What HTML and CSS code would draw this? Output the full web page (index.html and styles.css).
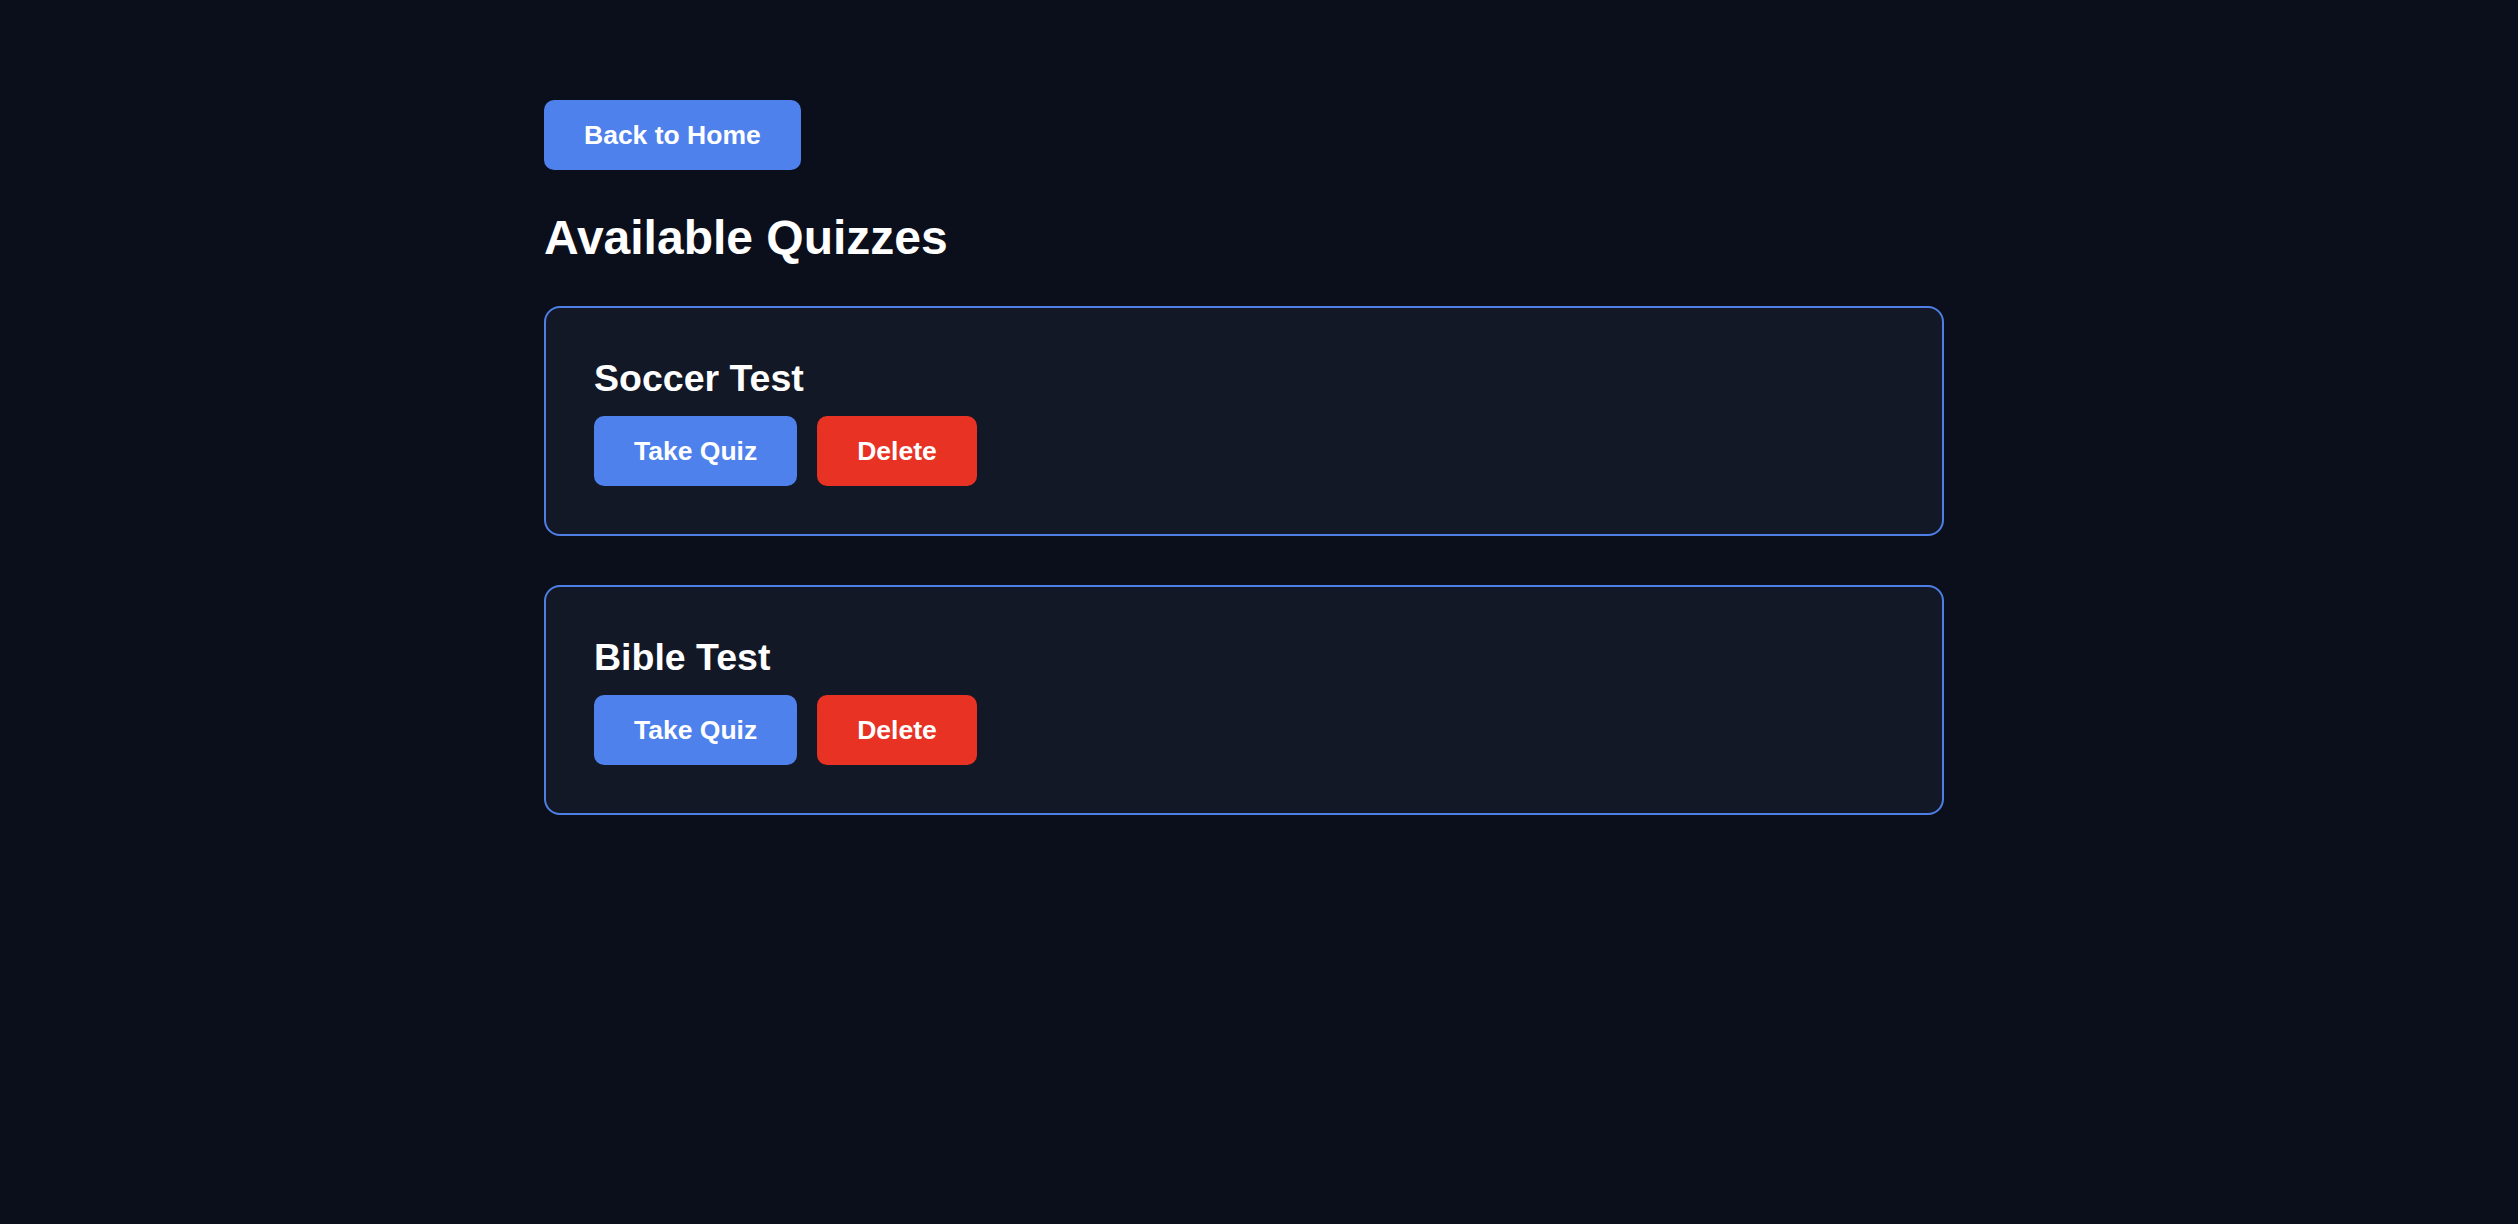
FILE: index.html
```html
<!DOCTYPE html>
<html lang="en">
<head>
<meta charset="utf-8">
<title>Available Quizzes</title>
<link rel="stylesheet" href="styles.css">
</head>
<body>
<main class="page">
  <button class="btn btn-blue btn-back">Back to Home</button>
  <h1 class="title">Available Quizzes</h1>
  <div class="list">
    <section class="card">
      <h2 class="card-title">Soccer Test</h2>
      <div class="actions">
        <button class="btn btn-blue">Take Quiz</button>
        <button class="btn btn-red">Delete</button>
      </div>
    </section>
    <section class="card">
      <h2 class="card-title">Bible Test</h2>
      <div class="actions">
        <button class="btn btn-blue">Take Quiz</button>
        <button class="btn btn-red">Delete</button>
      </div>
    </section>
  </div>
</main>
</body>
</html>
```

FILE: styles.css
```css
html, body {
  margin: 0;
  padding: 0;
  background: #0b0f1c;
  min-height: 100vh;
}
body {
  font-family: "Liberation Sans", Arial, Helvetica, sans-serif;
  color: #ffffff;
}
.page {
  width: 1400px;
  margin-left: 544px;
  padding-top: 100px;
  display: flex;
  flex-direction: column;
  align-items: flex-start;
}
.btn {
  font-family: "Liberation Sans", Arial, Helvetica, sans-serif;
  font-weight: 700;
  font-size: 26.5px;
  line-height: 30px;
  padding: 20px 40px;
  border: none;
  border-radius: 10px;
  color: #ffffff;
  cursor: pointer;
}
.btn-blue { background: #4f81ed; }
.btn-red { background: #e83224; }
.btn-back { padding: 20px 40px; }
.title {
  margin: 40px 0 40px 0;
  font-size: 48px;
  line-height: 56px;
  font-weight: 700;
}
.list {
  width: 100%;
  display: flex;
  flex-direction: column;
  gap: 49px;
}
.card {
  box-sizing: border-box;
  width: 100%;
  border: 2px solid #4f7fe4;
  border-radius: 16px;
  background: #121826;
  padding: 48px;
}
.card-title {
  margin: 0 0 15px 0;
  font-size: 37.5px;
  line-height: 45px;
  font-weight: 700;
}
.actions {
  display: flex;
  gap: 20px;
}
```
